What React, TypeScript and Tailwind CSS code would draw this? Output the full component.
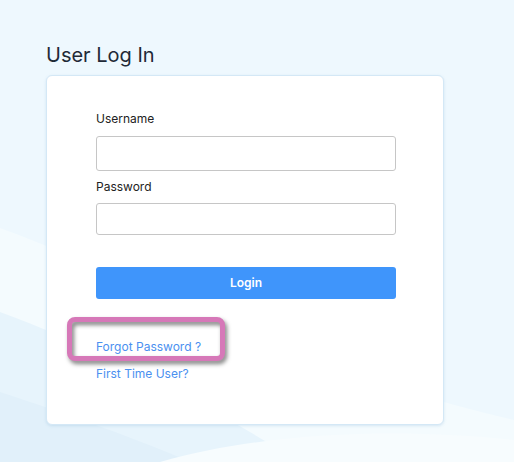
import React, { useState } from "react";

// decorative waves behind the page
function Waves() {
  return (
    <svg className="absolute inset-0 h-full w-full" viewBox="0 0 514 462" preserveAspectRatio="none">
      <rect width="514" height="462" fill="#eef8fe" />
      <path d="M0 228 C 120 270, 260 360, 514 420 L514 462 L0 462 Z" fill="#f4fbfe" />
      <path d="M0 312 C 90 345, 200 400, 300 462 L0 462 Z" fill="#e7f4fc" />
      <path d="M0 392 C 70 415, 140 440, 190 462 L0 462 Z" fill="#e1f0fa" />
      <path d="M160 462 C 280 428, 420 430, 514 440 L514 462 Z" fill="#f7fcfe" />
    </svg>
  );
}

export default function App() {
  const [username, setUsername] = useState("");
  const [password, setPassword] = useState("");

  return (
    <div className="relative min-h-[462px] w-full overflow-hidden font-['Inter',sans-serif]">
      <Waves />
      <div className="relative pl-[46px] pt-[40px]">
        <h1 className="text-[20px] leading-[30px] text-[#1f2a37]">User Log In</h1>
        <div className="relative mt-[5px] h-[350px] w-[398px] rounded-[6px] border border-[#d4e8f6] bg-white pl-[49px] pt-[35px] shadow-[0_1px_3px_rgba(120,170,210,0.25)]">
          <label className="block text-[12px] leading-4 text-[#222]">Username</label>
          <input
            value={username}
            onChange={(e) => setUsername(e.target.value)}
            className="mt-[9px] block h-[35px] w-[300px] rounded-[3px] border border-[#c6c6c6] bg-white px-2 text-[12px] outline-none"
          />
          <label className="mt-[8px] block text-[12px] leading-4 text-[#222]">Password</label>
          <input
            type="password"
            value={password}
            onChange={(e) => setPassword(e.target.value)}
            className="mt-[8px] block h-[32px] w-[300px] rounded-[3px] border border-[#c6c6c6] bg-white px-2 text-[12px] outline-none"
          />
          <button className="mt-[32px] block h-[32px] w-[300px] rounded-[3px] bg-[#3f95fb] text-[12px] font-semibold text-white">
            Login
          </button>
          <a className="mt-[40px] block text-[12px] leading-4 text-[#4a90f0]" href="#">
            Forgot Password ?
          </a>
          <a className="mt-[11px] block text-[12px] leading-4 text-[#4a90f0]" href="#">
            First Time User?
          </a>

          {/* highlight annotation */}
          <div className="absolute left-[20px] top-[241px] h-[44px] w-[158px] rounded-[8px] border-[5px] border-[#d678b8] drop-shadow-[2px_3px_2px_rgba(0,0,0,0.5)]" />
        </div>
      </div>
    </div>
  );
}
